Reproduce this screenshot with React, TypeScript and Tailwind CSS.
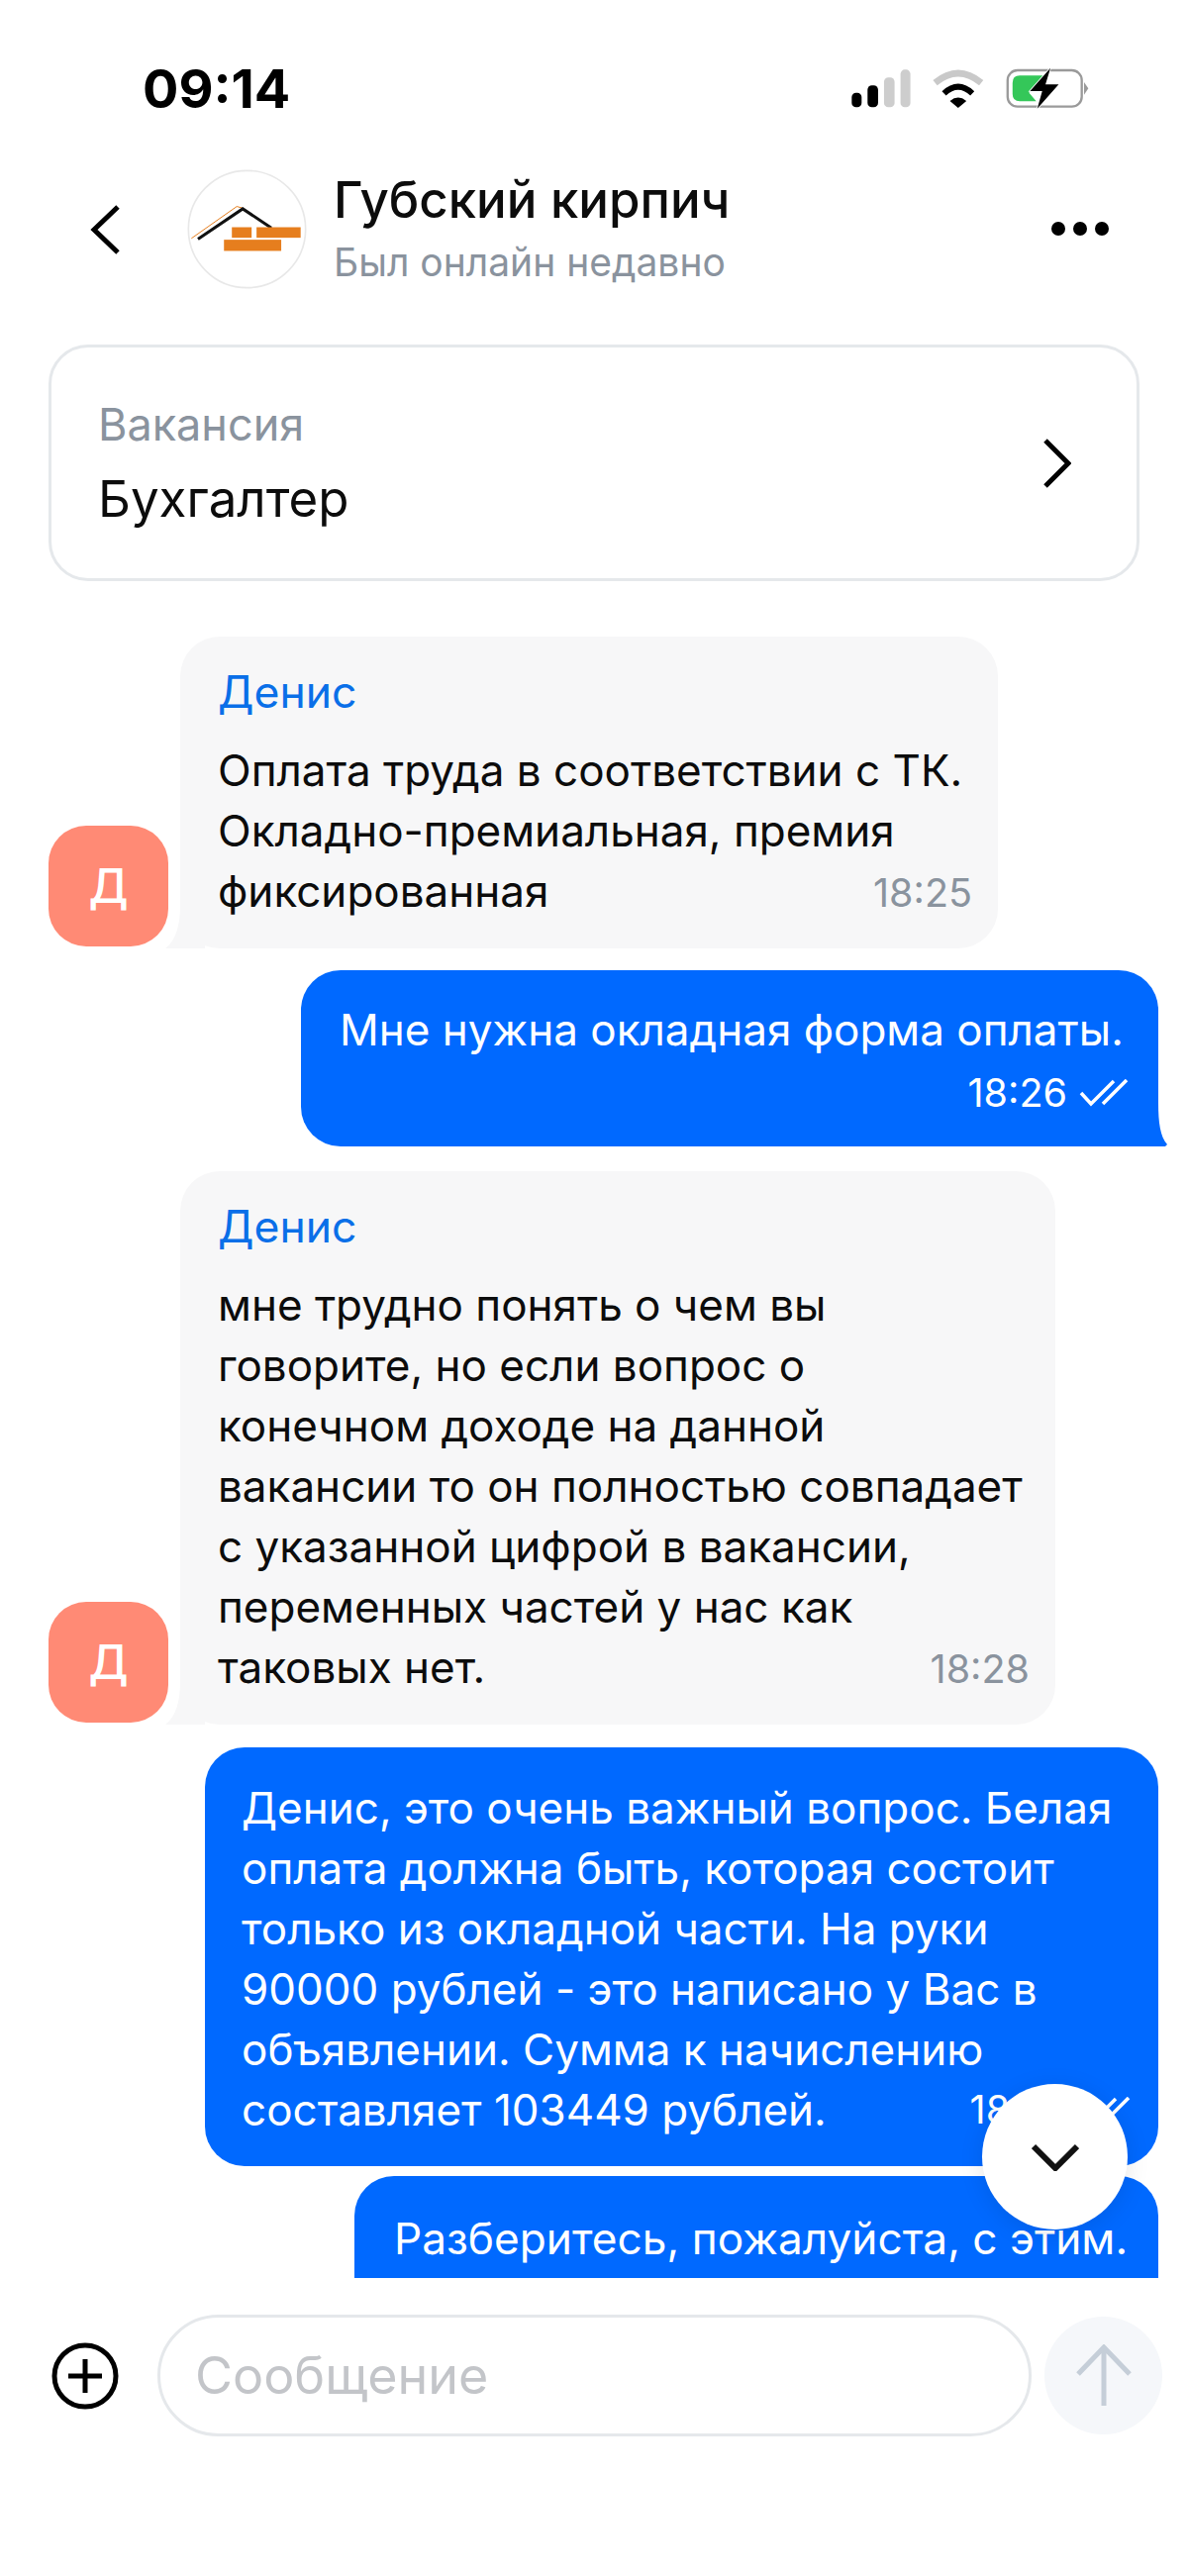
import React from "react";

function Check() {
  return (
    <svg width="50" height="28" viewBox="0 0 50 28" fill="none" stroke="#fff" strokeWidth="3.5">
      <path d="M2 14 L12 25 L35 2" />
      <path d="M24 25 L48 1" />
    </svg>
  );
}

function InTail() {
  return (
    <svg className="absolute left-[-15px] bottom-0" width="40" height="44" viewBox="0 0 40 44">
      <path d="M15 0 C15 20 11 36 0 44 L40 44 L40 0 Z" fill="#f7f7f8" />
    </svg>
  );
}

function OutTail() {
  return (
    <svg className="absolute right-[-9px] bottom-0" width="40" height="44" viewBox="0 0 40 44">
      <path d="M31 0 C31 20 33 34 40 42 L38 44 L0 44 L0 0 Z" fill="#0069ff" />
    </svg>
  );
}

function Avatar() {
  return (
    <div className="w-[121px] h-[122px] mb-[2px] shrink-0 rounded-[38px] bg-[#ff8a75] flex items-center justify-center text-white text-[48px] font-medium">
      Д
    </div>
  );
}

function Incoming({ lines, last, time, width }: { lines: string[]; last: string; time: string; width: string }) {
  return (
    <div className="flex shrink-0 items-end gap-[12px]">
      <Avatar />
      <div className={`relative ${width} rounded-[40px] bg-[#f7f7f8] pl-[38px] pr-[26px] pt-[26px] pb-[27px]`}>
        <InTail />
        <div className="relative text-[44.5px] leading-[60px] text-[#0a6fe8] mb-[19px]">Денис</div>
        <div className="relative text-[44px] leading-[61px] text-[#0c0c0c] whitespace-nowrap">
          {lines.map((l) => (
            <div key={l}>{l}</div>
          ))}
          <div className="flex justify-between items-center">
            <span>{last}</span>
            <span className="text-[39.5px] text-[#8a939e] translate-y-[2px]">{time}</span>
          </div>
        </div>
      </div>
    </div>
  );
}

function Status() {
  return (
    <svg width="243" height="45" viewBox="55 50 730 135">
      <rect x="62" y="130" width="30" height="44" rx="13" fill="#000" />
      <rect x="110" y="108" width="32" height="66" rx="13" fill="#000" />
      <rect x="160" y="84" width="32" height="90" rx="13" fill="#cdcdcd" />
      <rect x="210" y="60" width="30" height="114" rx="13" fill="#cdcdcd" />
      <path d="M315 100 Q385 42 455 100" fill="none" stroke="#c9c9c9" strokeWidth="20" />
      <path d="M342 132 Q385 92 428 132" fill="none" stroke="#000" strokeWidth="18" />
      <path d="M360 155 Q385 134 410 155 L385 176 Z" fill="#000" />
      <rect x="535" y="62" width="225" height="110" rx="30" fill="#fff" stroke="#9a9a9a" strokeWidth="7" />
      <path d="M572 78 L650 78 L600 130 L622 156 L572 156 Q550 156 550 134 L550 100 Q550 78 572 78 Z" fill="#34c759" />
      <path d="M665 55 L603 125 L640 125 L625 178 L690 105 L650 105 Z" fill="#000" stroke="#fff" strokeWidth="5" paintOrder="stroke" />
      <path d="M767 98 L780 117 L767 136 Z" fill="#9a9a9a" />
    </svg>
  );
}

export default function App() {
  return (
    <div className="relative w-[1200px] h-[2602px] overflow-hidden bg-white flex flex-col font-['Inter',sans-serif]">
      <div className="h-[171px] shrink-0 flex justify-between items-start pl-[144px] pr-[99px] pt-[59px]">
        <span className="text-[54px] leading-[62px] font-bold text-black">09:14</span>
        <div className="pt-[8px]">
          <Status />
        </div>
      </div>

      <div className="h-[121px] shrink-0 flex items-center pl-[91px] pr-[80px]">
        <svg width="30" height="50" viewBox="0 0 30 50" fill="none" stroke="#000" strokeWidth="5">
          <path d="M28 2 L4 25 L28 48" />
        </svg>
        <svg className="ml-[68px] shrink-0" width="121" height="121" viewBox="60 62 362 364">
          <circle cx="241" cy="244" r="178" fill="#fff" stroke="#e8e8e8" strokeWidth="5" />
          <path d="M72 272 L210 175 L228 180" fill="none" stroke="#e67e1e" strokeWidth="3" />
          <path d="M92 274 L228 182 L315 240" fill="none" stroke="#111" strokeWidth="9" />
          <rect x="195" y="238" width="60" height="32" fill="#e67e1e" />
          <rect x="270" y="238" width="134" height="32" fill="#e67e1e" />
          <rect x="171" y="276" width="174" height="34" fill="#e67e1e" />
        </svg>
        <div className="ml-[27px] mb-[3px] flex-1 flex flex-col">
          <span className="text-[51px] leading-[60px] font-medium text-[#0c0c0c]">Губский кирпич</span>
          <span className="text-[39px] leading-[46px] mt-[10px] text-[#8a939e]">Был онлайн недавно</span>
        </div>
        <div className="flex gap-[8px] mb-[2px]">
          <span className="w-[14px] h-[14px] rounded-full bg-black" />
          <span className="w-[14px] h-[14px] rounded-full bg-black" />
          <span className="w-[14px] h-[14px] rounded-full bg-black" />
        </div>
      </div>

      <div className="mt-[56px] mx-[49px] h-[239px] shrink-0 rounded-[40px] border-[3px] border-[#e5e8eb] flex items-center justify-between pl-[47px] pr-[66px]">
        <div className="flex flex-col">
          <span className="text-[45px] leading-[54px] text-[#8a939e]">Вакансия</span>
          <span className="text-[51px] leading-[60px] mt-[18px] text-[#0c0c0c]">Бухгалтер</span>
        </div>
        <svg width="28" height="50" viewBox="0 0 28 50" fill="none" stroke="#000" strokeWidth="5">
          <path d="M2 2 L25 25 L2 48" />
        </svg>
      </div>

      <div className="mt-[56px] h-[1658px] shrink-0 overflow-hidden flex flex-col pl-[49px] pr-[30px]">
        <Incoming
          width="w-[826px]"
          lines={["Оплата труда в соответствии с ТК.", "Окладно-премиальная, премия"]}
          last="фиксированная"
          time="18:25"
        />

        <div className="relative self-end shrink-0 w-[866px] h-[178px] mt-[22px] rounded-[40px] rounded-br-none bg-[#0069ff] pt-[30px] pl-[39px] pr-[30px] text-white">
          <OutTail />
          <div className="relative text-[44px] leading-[61px] whitespace-nowrap">Мне нужна окладная форма оплаты.</div>
          <div className="relative flex justify-end items-center gap-[12px] mt-[8px] text-[39.5px] leading-[50px]">
            <span>18:26</span>
            <Check />
          </div>
        </div>

        <div className="mt-[25px] shrink-0">
          <Incoming
            width="w-[884px]"
            lines={[
              "мне трудно понять о чем вы",
              "говорите, но если вопрос о",
              "конечном доходе на данной",
              "вакансии то он полностью совпадает",
              "с указанной цифрой в вакансии,",
              "переменных частей у нас как",
            ]}
            last="таковых нет."
            time="18:28"
          />
        </div>

        <div className="self-end shrink-0 w-[963px] h-[423px] mt-[23px] rounded-[40px] bg-[#0069ff] pt-[31px] pl-[37px] pr-[28px] text-white">
          <div className="text-[44px] leading-[61px] whitespace-nowrap">
            <div>Денис, это очень важный вопрос. Белая</div>
            <div>оплата должна быть, которая состоит</div>
            <div>только из окладной части. На руки</div>
            <div>90000 рублей - это написано у Вас в</div>
            <div>объявлении. Сумма к начислению</div>
            <div className="flex justify-between items-center">
              <span>составляет 103449 рублей.</span>
              <span className="flex items-center gap-[12px] text-[39.5px]">
                18:28
                <Check />
              </span>
            </div>
          </div>
        </div>

        <div className="self-end shrink-0 w-[812px] h-[200px] mt-[10px] rounded-[40px] bg-[#0069ff] pt-[33px] pl-[40px] text-white">
          <div className="text-[44.2px] leading-[61px] whitespace-nowrap">Разберитесь, пожалуйста, с этим.</div>
        </div>
      </div>

      <div className="mt-[37px] flex items-center pl-[52px]">
        <svg width="68" height="68" viewBox="0 0 68 68" fill="none" stroke="#000" strokeWidth="5">
          <circle cx="34" cy="34" r="31" />
          <path d="M34 17 V51 M17 34 H51" />
        </svg>
        <div className="ml-[39px] w-[883px] h-[123px] rounded-[62px] border-[3px] border-[#e5e8eb] flex items-center pl-[35px]">
          <span className="text-[52px] text-[#c3c5c9]">Сообщение</span>
        </div>
        <div className="ml-[13px] w-[119px] h-[119px] rounded-full bg-[#f5f7fa] flex items-center justify-center">
          <svg width="56" height="64" viewBox="0 0 56 64" fill="none" stroke="#c5ced8" strokeWidth="5">
            <path d="M28 62 V3 M2 30 L28 3 L54 30" />
          </svg>
        </div>
      </div>

      <div className="absolute left-[992px] top-[2105px] w-[147px] h-[147px] rounded-full bg-white shadow-[0_4px_24px_rgba(0,0,0,0.10)] flex items-center justify-center">
        <svg width="48" height="28" viewBox="0 0 48 28" fill="none" stroke="#111" strokeWidth="6">
          <path d="M2 3 L24 25 L46 3" />
        </svg>
      </div>
    </div>
  );
}
